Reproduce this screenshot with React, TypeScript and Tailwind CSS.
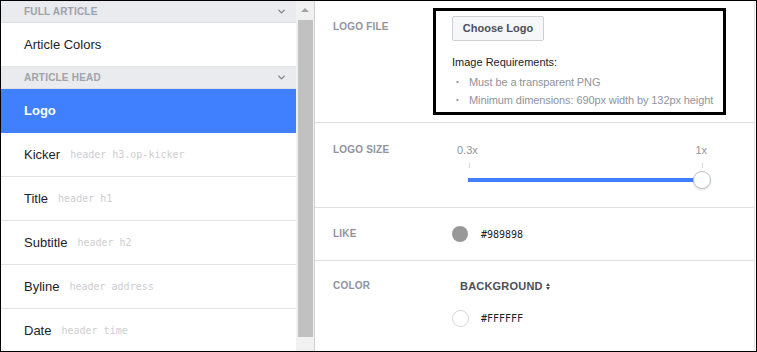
import React from 'react';
import { ChevronDown } from 'lucide-react';

const items = [
  { name: 'Kicker', sel: 'header h3.op-kicker' },
  { name: 'Title', sel: 'header h1' },
  { name: 'Subtitle', sel: 'header h2' },
  { name: 'Byline', sel: 'header address' },
  { name: 'Date', sel: 'header time' },
];

const mono = { fontFamily: '"DejaVu Sans Mono", monospace' };

const SectionHead: React.FC<{ label: string }> = ({ label }) => (
  <div className="h-[22px] shrink-0 flex items-center justify-between pl-[23px] pr-[9px] bg-[#e9ebee] border-b border-[#dddfe2] text-[10px] font-bold text-[#9ea2a9] tracking-[0.2px]">
    <span>{label}</span>
    <ChevronDown size={11} strokeWidth={3} className="text-[#7f8389]" />
  </div>
);

const Row: React.FC<{ children: React.ReactNode; active?: boolean }> = ({ children, active }) => (
  <div
    className={
      'h-[44px] shrink-0 flex items-center pl-[23px] border-b text-[13px] ' +
      (active ? 'bg-[#4080ff] border-[#4080ff] text-white font-bold' : 'bg-white border-[#e3e4e6] text-[#1d2129]')
    }
  >
    {children}
  </div>
);

const Label: React.FC<{ children: React.ReactNode }> = ({ children }) => (
  <div className="w-[119px] shrink-0 text-[10px] leading-[14px] font-bold text-[#90949c] tracking-[0.2px]">{children}</div>
);

export default function App() {
  return (
    <div
      className="w-[757px] h-[352px] border border-black flex overflow-hidden bg-white relative"
      style={{ fontFamily: '"Liberation Sans", Arial, sans-serif' }}
    >
      {/* sidebar */}
      <div className="w-[295px] shrink-0 flex flex-col overflow-hidden">
        <SectionHead label="FULL ARTICLE" />
        <Row>Article Colors</Row>
        <SectionHead label="ARTICLE HEAD" />
        <Row active>Logo</Row>
        {items.map((it) => (
          <Row key={it.name}>
            <span>{it.name}</span>
            <span className="ml-[10px] text-[10px] text-[#ccced2]" style={mono}>
              {it.sel}
            </span>
          </Row>
        ))}
      </div>

      {/* scrollbar */}
      <div className="w-[19px] shrink-0 bg-[#f1f1f1] flex flex-col items-center border-r border-[#cfcfcf]">
        <div className="h-[17px] flex items-center justify-center">
          <div className="w-0 h-0 border-l-[4px] border-r-[4px] border-b-[4px] border-l-transparent border-r-transparent border-b-[#a3a3a3]" />
        </div>
        <div className="w-[15px] h-[317px] bg-[#c1c1c1] mt-[2px]" />
      </div>

      {/* settings */}
      <div className="flex-1 flex flex-col border-r border-[#e3e4e6] mr-[1px]">
        <div className="h-[122px] shrink-0 flex pl-[18px] pt-[19px] border-b border-[#dddfe2]">
          <Label>LOGO FILE</Label>
          <div className="flex flex-col -mt-[4px]">
            <button className="w-[92px] h-[25px] bg-[#f6f7f9] border border-[#ced0d4] rounded-[2px] text-[11px] font-bold text-[#4b4f56]">
              Choose Logo
            </button>
            <div className="mt-[14px] text-[11px] leading-[14px] text-[#1d2129]">Image Requirements:</div>
            <ul className="mt-[4px] text-[11px] text-[#90949c] leading-[18px] tracking-[-0.1px]">
              <li className="flex"><span className="w-[17px] pl-[4px] text-[8px]">•</span>Must be a transparent PNG</li>
              <li className="flex"><span className="w-[17px] pl-[4px] text-[8px]">•</span>Minimum dimensions: 690px width by 132px height</li>
            </ul>
          </div>
        </div>

        <div className="h-[85px] shrink-0 flex pl-[18px] pt-[20px] border-b border-[#dddfe2]">
          <Label>LOGO SIZE</Label>
          <div className="w-[255px] flex flex-col">
            <div className="flex justify-between text-[11px] leading-[14px] text-[#90949c] pl-[5px]">
              <span>0.3x</span>
              <span>1x</span>
            </div>
            <div className="flex justify-between pl-[17px] pr-[4px] mt-[6px]">
              <div className="w-[1px] h-[5px] bg-[#d3d5d8]" />
              <div className="w-[1px] h-[5px] bg-[#d3d5d8]" />
            </div>
            <div className="relative h-[18px] mt-[3px] ml-[16px]">
              <div className="absolute left-0 top-[7px] w-[230px] h-[4px] bg-[#4080ff]" />
              <div className="absolute left-[225px] top-0 w-[18px] h-[18px] rounded-full bg-white border border-[#bec2c9] shadow-[0_1px_2px_rgba(0,0,0,0.15)]" />
            </div>
          </div>
        </div>

        <div className="h-[53px] shrink-0 flex items-center pl-[18px] border-b border-[#dddfe2]">
          <Label>LIKE</Label>
          <div className="w-[16px] h-[16px] rounded-full bg-[#989898]" />
          <span className="ml-[13px] text-[10px] text-[#1d2129]" style={mono}>#989898</span>
        </div>

        <div className="flex-1 flex pl-[18px] pt-[18px]">
          <Label>COLOR</Label>
          <div className="flex flex-col">
            <div className="ml-[8px] text-[11px] leading-[14px] font-bold text-[#4b4f56] flex items-center tracking-[0.2px]">
              BACKGROUND
              <span className="ml-[3px] flex flex-col gap-[1px]">
                <span className="w-0 h-0 border-l-[2.5px] border-r-[2.5px] border-b-[3px] border-l-transparent border-r-transparent border-b-[#4b4f56]" />
                <span className="w-0 h-0 border-l-[2.5px] border-r-[2.5px] border-t-[3px] border-l-transparent border-r-transparent border-t-[#4b4f56]" />
              </span>
            </div>
            <div className="flex items-center mt-[17px]">
              <div className="w-[17px] h-[17px] rounded-full bg-white border border-[#d3d5d8]" />
              <span className="ml-[12px] text-[10px] text-[#1d2129]" style={mono}>#FFFFFF</span>
            </div>
          </div>
        </div>
      </div>

      {/* highlight box */}
      <div className="absolute left-[432px] top-[7px] w-[293px] h-[107px] border-[3px] border-black pointer-events-none" />
    </div>
  );
}
